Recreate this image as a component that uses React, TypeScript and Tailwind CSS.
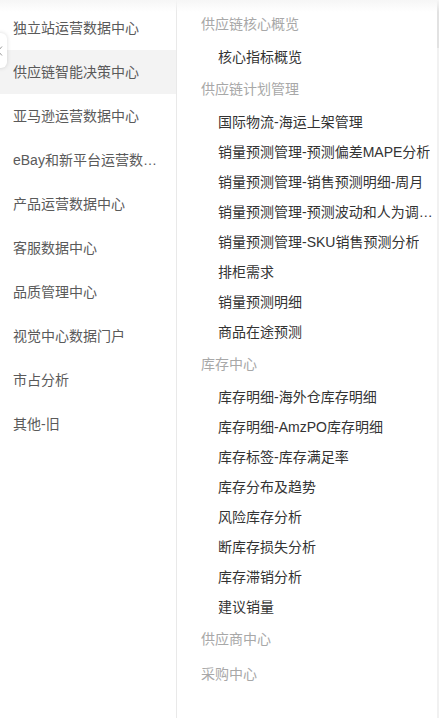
import React from "react";

const left = [
  "独立站运营数据中心",
  "供应链智能决策中心",
  "亚马逊运营数据中心",
  "eBay和新平台运营数据中心",
  "产品运营数据中心",
  "客服数据中心",
  "品质管理中心",
  "视觉中心数据门户",
  "市占分析",
  "其他-旧",
];

const groups: { title: string; items: string[]; cls: string }[] = [
  { title: "供应链核心概览", items: ["核心指标概览"], cls: "" },
  {
    title: "供应链计划管理",
    items: [
      "国际物流-海运上架管理",
      "销量预测管理-预测偏差MAPE分析",
      "销量预测管理-销售预测明细-周月",
      "销量预测管理-预测波动和人为调整分析",
      "销量预测管理-SKU销售预测分析",
      "排柜需求",
      "销量预测明细",
      "商品在途预测",
    ],
    cls: "",
  },
  {
    title: "库存中心",
    items: [
      "库存明细-海外仓库存明细",
      "库存明细-AmzPO库存明细",
      "库存标签-库存满足率",
      "库存分布及趋势",
      "风险库存分析",
      "断库存损失分析",
      "库存滞销分析",
      "建议销量",
    ],
    cls: "",
  },
  { title: "供应商中心", items: [], cls: "mb-[3px]" },
  { title: "采购中心", items: [], cls: "" },
];

const font = {
  fontFamily: '"Liberation Sans", "Noto Sans CJK SC", sans-serif',
};

export default function App() {
  return (
    <div
      className="relative flex h-[718px] w-[439px] overflow-hidden bg-white"
      style={font}
    >
      <div className="w-[177px] shrink-0 border-r border-[#e9e9e9] bg-white pt-[6px]">
        {left.map((t, i) => (
          <div
            key={t}
            className={`flex h-[44px] items-center pl-[13px] pr-[16px] text-[14px] text-[#5a5a5a] ${
              i === 1 ? "bg-[#f3f3f3]" : ""
            }`}
          >
            <span className="truncate">{t}</span>
          </div>
        ))}
      </div>
      <div className="w-[260px] shrink-0 pt-[8px] pl-[24px] pr-[2px]">
        {groups.map((g) => (
          <div key={g.title} className={g.cls}>
            <div className="flex h-[32px] items-center text-[14px] text-[#a8a8a8]">
              {g.title}
            </div>
            {g.items.length > 0 && (
              <div className="pt-[2px] pb-[1px]">
                {g.items.map((it) => (
                  <div
                    key={it}
                    className="flex h-[30px] items-center pl-[17px] text-[14px] text-[#333]"
                  >
                    <span className="truncate">{it}</span>
                  </div>
                ))}
              </div>
            )}
          </div>
        ))}
      </div>
      <div className="flex w-[2px] shrink-0 flex-col bg-[#f1f1f1]">
        <div className="h-[48px] bg-[#e2e2e2]" />
      </div>
      <div className="pointer-events-none absolute left-0 right-0 top-0 h-[12px] bg-gradient-to-b from-[#f6f6f6] to-transparent" />
      <div className="absolute left-[-16px] top-[33px] flex h-[35px] w-[23px] items-center justify-start rounded-md bg-white shadow-[0_0_4px_rgba(0,0,0,0.15)]">
        <svg
          className="ml-[13px]"
          width="6"
          height="10"
          viewBox="0 0 6 10"
          fill="none"
          stroke="#999"
          strokeWidth="1"
        >
          <path d="M5 0.5 L1 5 L5 9.5" />
        </svg>
      </div>
    </div>
  );
}
